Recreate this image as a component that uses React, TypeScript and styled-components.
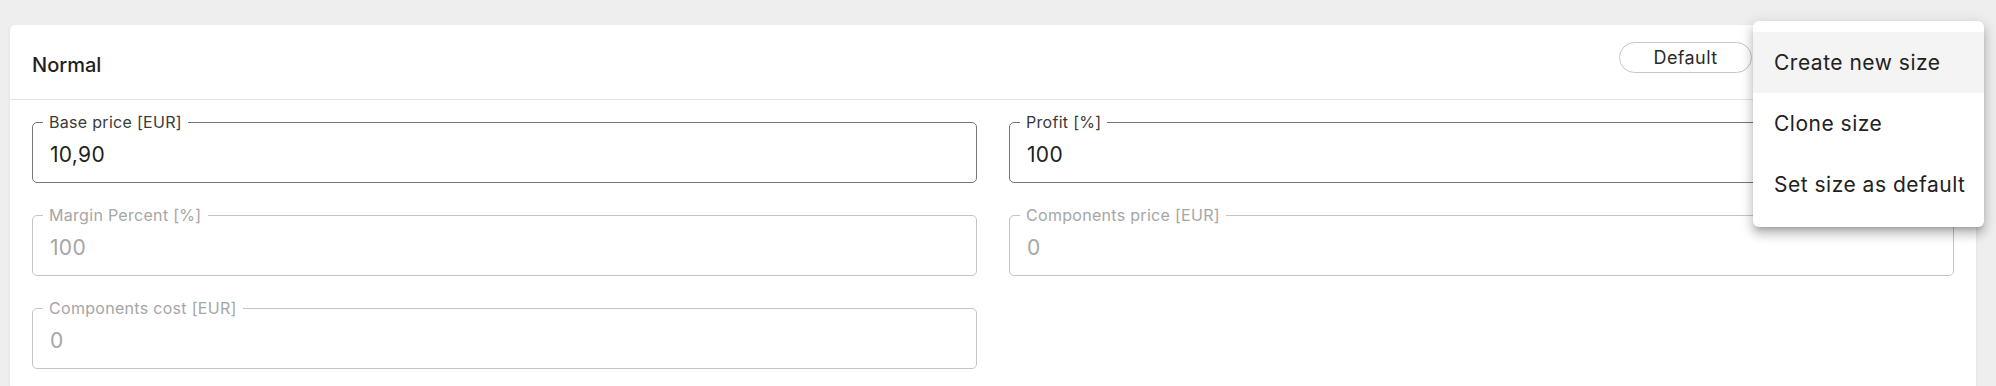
import React from "react";
import styled, { createGlobalStyle } from "styled-components";

const GlobalStyle = createGlobalStyle`
  html, body {
    margin: 0;
    padding: 0;
    background: #eeeeee;
  }
  body {
    font-family: Inter, "DejaVu Sans", sans-serif;
    color: #222222;
  }
`;

const Page = styled.div`
  position: relative;
  padding: 25px 20px 0 10px;
`;

const Card = styled.section`
  background: #ffffff;
  border-radius: 5px 5px 0 0;
  box-shadow: 0 1px 3px rgba(0, 0, 0, 0.08);
  padding-bottom: 17px;
`;

const Header = styled.header`
  display: flex;
  align-items: center;
  justify-content: space-between;
  height: 74px;
  padding: 0 22px;
  border-bottom: 1px solid #e4e4e4;
`;

const Title = styled.h2`
  margin: 6px 0 0;
  font-size: 20px;
  font-weight: 500;
  color: #1f1f1f;
`;

const Actions = styled.div`
  align-self: flex-start;
  display: flex;
  align-items: center;
  margin-top: 17px;
  margin-right: 202px;
`;

const Chip = styled.button`
  width: 133px;
  height: 31px;
  border: 1px solid #c6c6c6;
  border-radius: 16px;
  background: #ffffff;
  font-family: inherit;
  font-size: 18px;
  letter-spacing: 0.4px;
  color: #2a2a2a;
  cursor: pointer;
`;

const Body = styled.div`
  display: grid;
  grid-template-columns: 1fr 1fr;
  column-gap: 32px;
  row-gap: 24px;
  padding: 14px 22px 0;
`;

const Field = styled.fieldset<{ $disabled?: boolean }>`
  margin: 0;
  padding: 13px 17px 15px;
  min-width: 0;
  border: 1px solid ${(p) => (p.$disabled ? "#c4c4c4" : "#767676")};
  border-radius: 5px;
  color: ${(p) => (p.$disabled ? "#a6a6a6" : "#1f1f1f")};
`;

const Legend = styled.legend<{ $disabled?: boolean }>`
  padding: 0 6px;
  margin-left: -7px;
  font-size: 16px;
  line-height: 16px;
  letter-spacing: 0.3px;
  color: ${(p) => (p.$disabled ? "#a6a6a6" : "#3a3a3a")};
`;

const Value = styled.div`
  font-size: 21px;
  line-height: 24px;
  letter-spacing: 0.3px;
`;

const Menu = styled.ul`
  position: absolute;
  top: 21px;
  left: 1753px;
  width: 231px;
  margin: 0;
  padding: 11px 0 12px;
  list-style: none;
  background: #ffffff;
  border-radius: 6px;
  box-shadow: 0 5px 5px -3px rgba(0, 0, 0, 0.2),
    0 8px 10px 1px rgba(0, 0, 0, 0.14), 0 3px 14px 2px rgba(0, 0, 0, 0.12);
`;

const MenuItem = styled.li<{ $active?: boolean }>`
  display: flex;
  align-items: center;
  height: 61px;
  padding: 0 21px;
  font-size: 21px;
  letter-spacing: 0.5px;
  color: #222222;
  background: ${(p) => (p.$active ? "#f4f4f4" : "transparent")};
  white-space: nowrap;
  cursor: pointer;
`;

const fields = [
  { label: "Base price [EUR]", value: "10,90" },
  { label: "Profit [%]", value: "100" },
  { label: "Margin Percent [%]", value: "100", disabled: true },
  { label: "Components price [EUR]", value: "0", disabled: true },
  { label: "Components cost [EUR]", value: "0", disabled: true },
];

const App: React.FC = () => {
  return (
    <Page>
      <GlobalStyle />
      <Card>
        <Header>
          <Title>Normal</Title>
          <Actions>
            <Chip>Default</Chip>
          </Actions>
        </Header>
        <Body>
          {fields.map((f) => (
            <Field key={f.label} $disabled={f.disabled}>
              <Legend $disabled={f.disabled}>{f.label}</Legend>
              <Value>{f.value}</Value>
            </Field>
          ))}
        </Body>
      </Card>
      <Menu>
        <MenuItem $active>Create new size</MenuItem>
        <MenuItem>Clone size</MenuItem>
        <MenuItem>Set size as default</MenuItem>
      </Menu>
    </Page>
  );
};

export default App;
